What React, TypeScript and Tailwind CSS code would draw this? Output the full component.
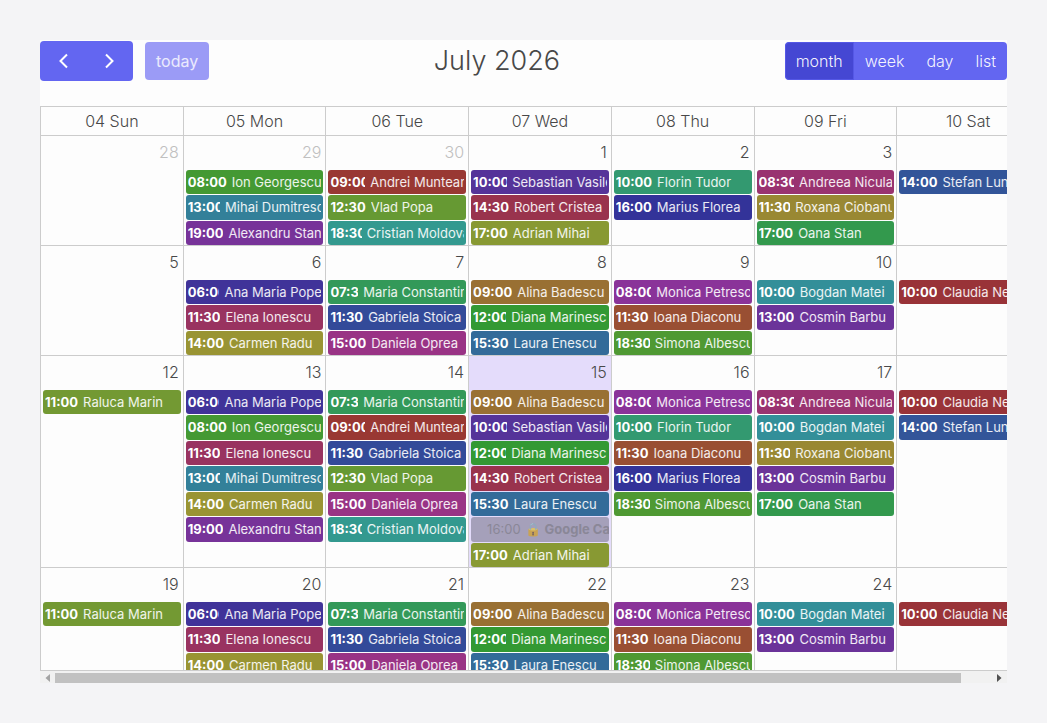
import clsx from "clsx";

type Person = { time: string; name: string; color: string };

const people: Record<string, Person> = {
  ion: { time: "08:00", name: "Ion Georgescu", color: "bg-[#449933]" },
  mihai: { time: "13:00", name: "Mihai Dumitrescu", color: "bg-[#338099]" },
  alexandru: { time: "19:00", name: "Alexandru Stan", color: "bg-[#773399]" },
  andrei: { time: "09:00", name: "Andrei Munteanu", color: "bg-[#993833]" },
  vlad: { time: "12:30", name: "Vlad Popa", color: "bg-[#669933]" },
  cristian: { time: "18:30", name: "Cristian Moldovan", color: "bg-[#33998f]" },
  sebastian: { time: "10:00", name: "Sebastian Vasile", color: "bg-[#553399]" },
  robert: { time: "14:30", name: "Robert Cristea", color: "bg-[#99334d]" },
  adrian: { time: "17:00", name: "Adrian Mihai", color: "bg-[#889933]" },
  florin: { time: "10:00", name: "Florin Tudor", color: "bg-[#339970]" },
  marius: { time: "16:00", name: "Marius Florea", color: "bg-[#333399]" },
  andreea: { time: "08:30", name: "Andreea Niculae", color: "bg-[#993370]" },
  roxana: { time: "11:30", name: "Roxana Ciobanu", color: "bg-[#998833]" },
  oana: { time: "17:00", name: "Oana Stan", color: "bg-[#33994d]" },
  stefan: { time: "14:00", name: "Stefan Lungu", color: "bg-[#335599]" },
  ana: { time: "06:00", name: "Ana Maria Popescu", color: "bg-[#403399]" },
  elena: { time: "11:30", name: "Elena Ionescu", color: "bg-[#993360]" },
  carmen: { time: "14:00", name: "Carmen Radu", color: "bg-[#999433]" },
  maria: { time: "07:30", name: "Maria Constantinescu", color: "bg-[#339959]" },
  gabriela: { time: "11:30", name: "Gabriela Stoica", color: "bg-[#334a99]" },
  daniela: { time: "15:00", name: "Daniela Oprea", color: "bg-[#993385]" },
  alina: { time: "09:00", name: "Alina Badescu", color: "bg-[#997033]" },
  diana: { time: "12:00", name: "Diana Marinescu", color: "bg-[#339933]" },
  laura: { time: "15:30", name: "Laura Enescu", color: "bg-[#336b99]" },
  monica: { time: "08:00", name: "Monica Petrescu", color: "bg-[#8a3399]" },
  ioana: { time: "11:30", name: "Ioana Diaconu", color: "bg-[#994f33]" },
  simona: { time: "18:30", name: "Simona Albescu", color: "bg-[#4f9933]" },
  bogdan: { time: "10:00", name: "Bogdan Matei", color: "bg-[#338f99]" },
  cosmin: { time: "13:00", name: "Cosmin Barbu", color: "bg-[#6b3399]" },
  claudia: { time: "10:00", name: "Claudia Neagu", color: "bg-[#993338]" },
  raluca: { time: "11:00", name: "Raluca Marin", color: "bg-[#739933]" },
};

const weekdays = ["04 Sun", "05 Mon", "06 Tue", "07 Wed", "08 Thu", "09 Fri", "10 Sat"];

type Day = { day: number; other?: boolean; today?: boolean; events: string[] };

const weeks: { rows: string; days: Day[] }[] = [
  {
    rows: "h-[76px] grid-rows-3",
    days: [
      { day: 28, other: true, events: [] },
      { day: 29, other: true, events: ["ion", "mihai", "alexandru"] },
      { day: 30, other: true, events: ["andrei", "vlad", "cristian"] },
      { day: 1, events: ["sebastian", "robert", "adrian"] },
      { day: 2, events: ["florin", "marius"] },
      { day: 3, events: ["andreea", "roxana", "oana"] },
      { day: 4, events: ["stefan"] },
    ],
  },
  {
    rows: "h-[76px] grid-rows-3",
    days: [
      { day: 5, events: [] },
      { day: 6, events: ["ana", "elena", "carmen"] },
      { day: 7, events: ["maria", "gabriela", "daniela"] },
      { day: 8, events: ["alina", "diana", "laura"] },
      { day: 9, events: ["monica", "ioana", "simona"] },
      { day: 10, events: ["bogdan", "cosmin"] },
      { day: 11, events: ["claudia"] },
    ],
  },
  {
    rows: "h-[178px] grid-rows-7",
    days: [
      { day: 12, events: ["raluca"] },
      { day: 13, events: ["ana", "ion", "elena", "mihai", "carmen", "alexandru"] },
      { day: 14, events: ["maria", "andrei", "gabriela", "vlad", "daniela", "cristian"] },
      {
        day: 15,
        today: true,
        events: ["alina", "sebastian", "diana", "robert", "laura", "google", "adrian"],
      },
      { day: 16, events: ["monica", "florin", "ioana", "marius", "simona"] },
      { day: 17, events: ["andreea", "bogdan", "roxana", "cosmin", "oana"] },
      { day: 18, events: ["claudia", "stefan"] },
    ],
  },
  {
    rows: "h-[76px] grid-rows-3",
    days: [
      { day: 19, events: ["raluca"] },
      { day: 20, events: ["ana", "elena", "carmen"] },
      { day: 21, events: ["maria", "gabriela", "daniela"] },
      { day: 22, events: ["alina", "diana", "laura"] },
      { day: 23, events: ["monica", "ioana", "simona"] },
      { day: 24, events: ["bogdan", "cosmin"] },
      { day: 25, events: ["claudia"] },
    ],
  },
];

const Chevron = ({ points }: { points: string }) => (
  <svg width="10" height="16" viewBox="0 0 10 16" fill="none" stroke="currentColor" strokeWidth="2" aria-hidden="true">
    <polyline points={points} />
  </svg>
);

const EventItem = ({ id }: { id: string }) => {
  if (id === "google") {
    return (
      <li className="min-h-0 px-0.5 pb-px">
        <a href="#" className="flex h-full items-center gap-1 overflow-hidden rounded-[3px] bg-[#a5a0ba] pt-px pl-4 text-[13px] whitespace-nowrap text-[#8a8797]">
          <span>16:00</span>
          <span className="opacity-60">🔒</span>
          <span className="font-bold">Google Calendar</span>
        </a>
      </li>
    );
  }

  const { time, name, color } = people[id];
  return (
    <li className="min-h-0 px-0.5 pb-px">
      <a href="#" className={clsx("flex h-full items-center overflow-hidden rounded-[3px] px-0.5 pt-px text-[13px] whitespace-nowrap text-white", color)}>
        <span className="mr-[5px] overflow-hidden font-bold">{time}</span>
        <span className="min-w-0 grow overflow-hidden text-white/90">{name}</span>
      </a>
    </li>
  );
};

export default function App() {
  return (
    <div className="flex h-screen flex-col bg-[#f4f4f6] p-10 font-[Inter,sans-serif] text-base text-[#484848]">
      <main className="flex min-h-0 flex-1 flex-col bg-[#fdfdfd]">
        {/* Toolbar */}
        <header className="mb-6 flex items-center justify-between">
          <div className="flex items-center gap-3">
            <div className="flex h-10 overflow-hidden rounded bg-[#6366f1] text-white">
              <button type="button" aria-label="Previous month" className="flex w-[47px] items-center justify-center">
                <Chevron points="8,1.5 1.5,8 8,14.5" />
              </button>
              <button type="button" aria-label="Next month" className="flex w-[46px] items-center justify-center">
                <Chevron points="1,1.5 7.5,8 1,14.5" />
              </button>
            </div>
            <button type="button" disabled className="h-[38px] rounded bg-[#9b9bf6] px-[11px] text-white/80">
              today
            </button>
          </div>
          <h1 className="text-[27px] leading-[42px] font-light">July 2026</h1>
          <div className="flex h-[38px] overflow-hidden rounded bg-[#6366f1] font-light text-white/95">
            <button type="button" className="rounded-l border border-[#5558e6] bg-[#4547d3] px-2.5">month</button>
            <button type="button" className="px-[11px]">week</button>
            <button type="button" className="px-[11px]">day</button>
            <button type="button" className="px-[11px]">list</button>
          </div>
        </header>

        {/* Month grid */}
        <div className="min-h-0 flex-1 overflow-auto border-b border-[#cccccc] [scrollbar-width:none]">
          <table className="w-full min-w-[1000px] table-fixed border-collapse">
            <thead>
              <tr>
                {weekdays.map((label) => (
                  <th key={label} scope="col" className="border border-[#cccccc] p-0.5 font-light">
                    {label}
                  </th>
                ))}
              </tr>
            </thead>
            <tbody>
              {weeks.map((week, i) => (
                <tr key={i}>
                  {week.days.map((d) => (
                    <td key={d.day} className={clsx("border border-[#cccccc] p-0 align-top", d.today && "bg-[#e4dcfb]")}>
                      <div className={clsx("mb-0.5 p-1 text-right font-light", d.other && "text-[#c0c0c0]")}>{d.day}</div>
                      <ul className={clsx("-mb-px grid grid-cols-1", week.rows)}>
                        {d.events.map((id) => (
                          <EventItem key={id} id={id} />
                        ))}
                      </ul>
                    </td>
                  ))}
                </tr>
              ))}
            </tbody>
          </table>
        </div>

        {/* Horizontal scrollbar */}
        <div className="flex h-3 bg-[#f1f1f1] pt-0.5">
          <div className="flex w-[15px] items-center justify-center">
            <svg width="5" height="8" viewBox="0 0 5 8" fill="#a3a3a3" aria-hidden="true">
              <polygon points="5,0 5,8 0.5,4" />
            </svg>
          </div>
          <div className="flex-1">
            <div className="h-full w-29/30 bg-[#c1c1c1]" />
          </div>
          <div className="flex w-[15px] items-center justify-center">
            <svg width="5" height="8" viewBox="0 0 5 8" fill="#505050" aria-hidden="true">
              <polygon points="0,0 0,8 4.5,4" />
            </svg>
          </div>
        </div>
      </main>
    </div>
  );
}
